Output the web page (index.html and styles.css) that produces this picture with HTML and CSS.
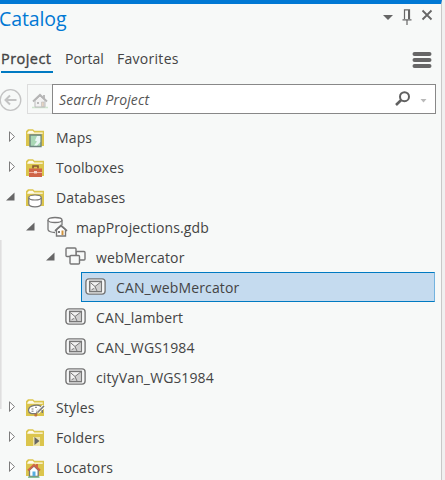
FILE: index.html
```html
<!DOCTYPE html>
<html lang="en">
<head>
<meta charset="utf-8">
<title>Catalog</title>
<link rel="stylesheet" href="styles.css">
</head>
<body>
<svg width="0" height="0" class="defs">
  <defs>
    <symbol id="closed" viewBox="0 0 10 14"><path d="M1.5 1.8v9.6l5-4.8z" fill="#fff" stroke="#7c7c7c"/></symbol>
    <symbol id="open" viewBox="0 0 10 14"><path d="M8.5 2.5v8H0z" fill="#666"/></symbol>
    <symbol id="folder" viewBox="0 0 20 20">
      <path d="M1 3.2 3 1.2h5L9.5 2.7H19V18H1z" fill="#dbc54c"/>
      <path d="M2.3 4.7 4 2.7h3.8l1.3 1.7h8.6v1.3H2.3z" fill="#fffbea"/>
    </symbol>
    <symbol id="feature" viewBox="0 0 21 17">
      <rect x=".9" y=".9" width="19.2" height="15.2" rx="3" fill="#f6f7f7" stroke="#777" stroke-width="1.4"/>
      <rect x="4.7" y="3.4" width="11.6" height="10.2" fill="#f2f2f2" stroke="#777" stroke-width="1.5"/>
      <path d="M5.5 13 15.7 4v9z" fill="#cfcfcf"/>
      <path d="m5.5 4.7 4.5 3.8L15.8 4M10 8.5 12 13M6.5 11.8l2.3-1.3" fill="none" stroke="#777"/>
    </symbol>
  </defs>
</svg>
<main class="pane">
  <header class="titlebar">
    <h1>Catalog</h1>
    <svg class="window-tools" width="56" height="20" viewBox="0 0 56 20">
      <path d="M0 6h10l-5 5z" fill="#666"/>
      <path d="M21.5 10V.8h5V10M19.5 10.8h9M24 11V16" fill="none" stroke="#666" stroke-width="1.2"/>
      <path d="M26 1v9" stroke="#666" stroke-width="2"/>
      <path d="m39.5 1.5 9 9M48.5 1.5l-9 9" stroke="#666" stroke-width="1.8"/>
    </svg>
  </header>
  <nav class="tabs">
    <a class="tab active">Project</a>
    <a class="tab portal">Portal</a>
    <a class="tab favorites">Favorites</a>
    <svg class="menu" width="20" height="18" viewBox="0 0 20 18"><path d="M2.5 3h15M2.5 9h15M2.5 15h15" stroke="#666" stroke-width="4" stroke-linecap="round"/></svg>
  </nav>
  <div class="searchbar">
    <svg class="back" width="22" height="24" viewBox="0 0 22 24"><circle cx="10.5" cy="12" r="10.3" fill="none" stroke="#c3c3c3" stroke-width="1.3"/><path d="M16.5 12H6M10 7.5 5.5 12l4.5 4.5" fill="none" stroke="#c3c3c3" stroke-width="2"/></svg>
    <div class="home"><svg width="16" height="16" viewBox="0 0 16 16"><path d="M0 14.5h16" stroke="#cfe5cf" stroke-width="1.5"/><path d="M3 7.5 8 3l5 4.5V14H3z" fill="#f2f2f2" stroke="#bbb"/><path d="M11 2h2v4h-2z" fill="#bbb"/><path d="m1 8.5 7-6.7 7 6.7" fill="none" stroke="#b5b5b5" stroke-width="1.8"/><path d="M5 9h2v2H5z" fill="#bbb"/><path d="M9.5 9h2.5v4.5H9.5z" fill="#e5d5c5" stroke="#bbb" stroke-width=".6"/></svg></div>
    <div class="search">
      <span>Search Project</span>
      <svg width="34" height="18" viewBox="0 0 34 18"><circle cx="9.5" cy="6.7" r="4.5" fill="none" stroke="#606060" stroke-width="2"/><path d="M6.2 10 1 15" stroke="#606060" stroke-width="2.6"/><path d="M25.5 9h6l-3 3.5z" fill="#b9b9b9"/></svg>
    </div>
  </div>
  <ul class="tree">
    <li class="row"><svg class="arrow"><use href="#closed"/></svg><svg class="icon" viewBox="0 0 20 20"><use href="#folder"/><path d="M5 7h11v11.5H5z" fill="#a9d7b5" stroke="#6e8580" stroke-width="1.4"/><path d="M12 8h3.3v6L12 17.5H9l3-4-2-1z" fill="#e9f6f4"/></svg><span>Maps</span></li>
    <li class="row"><svg class="arrow"><use href="#closed"/></svg><svg class="icon" viewBox="0 0 20 20"><use href="#folder"/><path d="M8 10.5V8h5v2.5" fill="none" stroke="#875630" stroke-width="1.6"/><path d="M4 10.5h13V19H4z" fill="#cf6548"/><path d="M4 14.5h13" stroke="#f2b2a0"/><path d="M9 13h3v2.5H9z" fill="#f5d6ca"/></svg><span>Toolboxes</span></li>
    <li class="row"><svg class="arrow expanded"><use href="#open"/></svg><svg class="icon" viewBox="0 0 20 20"><use href="#folder"/><path d="M3.8 9.4v6.4c0 4 12.4 4 12.4 0V9.4" fill="#fff" stroke="#777" stroke-width="1.2"/><ellipse cx="10" cy="9.5" rx="6.2" ry="2.5" fill="#fff" stroke="#777" stroke-width="1.2"/></svg><span>Databases</span></li>
    <li class="row level-1"><svg class="arrow"><use href="#open"/></svg><svg class="icon gdb" viewBox="0 0 22 22"><path d="M2 4v9.5c0 2 4 3 7 3M16 4v5" fill="none" stroke="#777" stroke-width="1.3"/><ellipse cx="9" cy="4" rx="7" ry="2.5" fill="#fff" stroke="#777" stroke-width="1.3"/><path d="M10.5 13.5V20h9v-6.5L15 10z" fill="#fff" stroke="#777" stroke-width="1.4"/><path d="m9 14.8 6-5.5 6 5.5" fill="none" stroke="#777" stroke-width="1.6"/><path d="M12 15h2v2h-2z" fill="#777"/><path d="M15.5 14.5h2V19h-2z" fill="#cf923d"/></svg><span>mapProjections.gdb</span></li>
    <li class="row level-2"><svg class="arrow"><use href="#open"/></svg><svg class="icon dataset" viewBox="0 0 21 18"><g fill="#f7f9f8" stroke="#777" stroke-width="1.4"><rect x="11" y="4.5" width="9" height="8.5" rx="1"/><rect x="1" y="1" width="10" height="8.5" rx="1"/><rect x="5" y="8.5" width="9.5" height="8.5" rx="1"/></g></svg><span>webMercator</span></li>
    <li class="row selected"><svg class="icon feature"><use href="#feature"/></svg><span>CAN_webMercator</span></li>
    <li class="row leaf"><svg class="icon feature"><use href="#feature"/></svg><span>CAN_lambert</span></li>
    <li class="row leaf"><svg class="icon feature"><use href="#feature"/></svg><span>CAN_WGS1984</span></li>
    <li class="row leaf"><svg class="icon feature"><use href="#feature"/></svg><span>cityVan_WGS1984</span></li>
    <li class="row"><svg class="arrow"><use href="#closed"/></svg><svg class="icon" viewBox="0 0 20 20"><use href="#folder"/><path d="M3.5 12.5C3.5 7 14.5 5.5 16.5 9.5l-4 3c-1.5 1 .5 3-2 3-3 .5-7 0-7-3z" fill="#fff" stroke="#777" stroke-width="1.2"/><path d="M6.5 11h2M10 9.3h2M6.5 13.2h2" stroke="#777"/><path d="m19 8-6.5 6.5" stroke="#fff" stroke-width="3.4"/><path d="m19 8-6.5 6.5" stroke="#777" stroke-width="1.6"/><path d="M17.3 12v3" stroke="#777" stroke-width="1.5"/><circle cx="10.8" cy="17" r="1.6" fill="#bd7441"/></svg><span>Styles</span></li>
    <li class="row"><svg class="arrow"><use href="#closed"/></svg><svg class="icon" viewBox="0 0 20 20"><use href="#folder"/><path d="M8 9h7v9H8z" fill="#eee3a4"/><path d="M9.5 9v8l5-4z" fill="#666"/></svg><span>Folders</span></li>
    <li class="row"><svg class="arrow"><use href="#closed"/></svg><svg class="icon" viewBox="0 0 20 20"><use href="#folder"/><path d="M4.5 12v6.5h8.7V12L9 8z" fill="#fff" stroke="#777" stroke-width="1.3"/><path d="M11 6h2v4h-2z" fill="#cf6548"/><path d="m3 12.5 6-5.7 6 5.7" fill="none" stroke="#cf6548" stroke-width="2"/><path d="M7.5 13.5h3V18h-3z" fill="#57aee0"/><path d="M3 19.2h11.5" stroke="#7fc095" stroke-width="1.4"/></svg><span>Locators</span></li>
  </ul>
  <div class="edge-shadow"></div>
</main>
</body>
</html>
```
FILE: styles.css
```css
* { box-sizing: border-box; }
body { margin: 0; background: #f0f0f0; font-family: "Open Sans", "Noto Sans", sans-serif; font-size: 14px; color: #444; overflow: hidden; }
.defs { position: absolute; }
svg { flex: none; display: block; }
.pane { position: relative; width: 442px; height: 480px; border-top: 4px solid #0078d4; border-right: 1px solid #c8c8c8; background: #f7f9f8; }
.titlebar { height: 34px; display: flex; justify-content: space-between; }
h1 { margin: 0 0 0 -1px; font-size: 19.5px; line-height: 29px; font-weight: 400; color: #0078d4; letter-spacing: -.1px; }
.window-tools { margin: 5px 2px 0 0; }
.tabs { height: 43px; display: flex; padding: 8px 9px 0 1px; }
.tab { height: 27px; line-height: 25px; margin-right: 12px; white-space: nowrap; }
.active { width: 52px; border-bottom: 2px solid #007ac2; letter-spacing: .45px; -webkit-text-stroke: .35px #444; font-size: 14.5px; }
.favorites { letter-spacing: .3px; margin-left: 1px; }
.menu { margin: 5px 0 0 auto; }
.searchbar { height: 38px; display: flex; padding: 3px 5px 5px 0; }
.back { margin: 4px 5px 0 0; }
.home { width: 25px; height: 30px; border: 1px solid #ddd; border-right: 0; padding: 8px 0 0 4px; }
.search { width: 384px; height: 30px; border: 1px solid #888; background: #fff; display: flex; align-items: center; justify-content: space-between; padding: 0 6px 0 6px; font-style: italic; color: #555; letter-spacing: .13px; }
.tree { list-style: none; margin: 0; padding: 3px 0 0; }
.row { height: 30px; display: flex; align-items: center; padding-left: 6px; letter-spacing: .13px; }
.row span, .search span { white-space: nowrap; }
.arrow { width: 10px; height: 14px; margin: -1px 7px 0 2px; }
.expanded { margin-left: 0; margin-right: 9px; }
.icon { width: 20px; height: 20px; margin: 1px 11px 0 0; }
.level-1 { padding-left: 24px; }
.level-2 { padding-left: 44px; }
.gdb { width: 22px; height: 22px; margin: 0 8px 0 3px; }
.dataset { width: 21px; height: 18px; margin: -2px 10px 0 2px; }
.feature { width: 21px; height: 17px; margin: -2px 10px 0 0; }
.leaf { padding-left: 65px; }
.selected { margin: 0 6px 0 81px; padding-left: 3px; border: 1px solid #007ac2; border-right-color: #73b3df; background: #c5dbef; }
.edge-shadow { position: absolute; left: 0; top: 236px; width: 2px; height: 169px; background: linear-gradient(90deg, #dadada, #eee); }
```
